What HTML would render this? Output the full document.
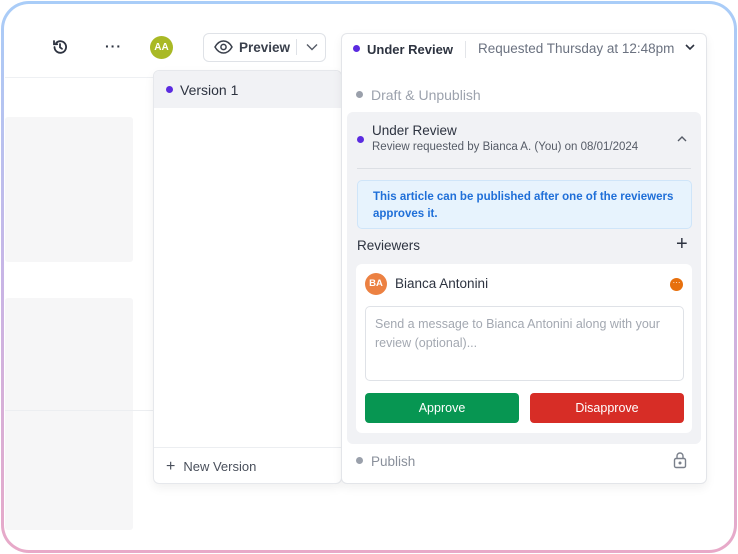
<!DOCTYPE html>
<html><head><style>
*{box-sizing:border-box;margin:0;padding:0}
body{width:738px;height:554px;background:#fff;font-family:"Liberation Sans",sans-serif;position:relative;overflow:hidden;color:#2d3340}
.frame{position:absolute;left:1px;top:1px;width:736px;height:552px;border-radius:28px;padding:3px;background:linear-gradient(#a9cdf8,#c8b5e6 50%,#e8a9c8)}
.inner{width:100%;height:100%;border-radius:25px;background:#fff;position:relative;overflow:hidden}
.a{position:absolute}
.dot{display:inline-block;width:7px;height:7px;border-radius:50%;background:#5b2be0}
.gdot{background:#9aa0ab}
</style></head><body>
<div class="frame"><div class="inner"></div></div>
<div class="a" style="left:5px;top:77px;width:336px;height:1px;background:#eef0f3"></div>
<div class="a" style="left:5px;top:117px;width:128px;height:145px;background:#f6f6f7;border-radius:3px"></div>
<div class="a" style="left:5px;top:298px;width:128px;height:232px;background:#f6f6f7;border-radius:3px"></div>
<div class="a" style="left:5px;top:410px;width:150px;height:1px;background:#eceef1"></div>
<svg class="a" style="left:51px;top:38px" width="18" height="18" viewBox="0 0 18 18" fill="none" stroke="#2d3340" stroke-width="1.8" stroke-linecap="round"><path d="M3.5 9a5.8 5.8 0 1 0 1.7-4.1"/><path d="M3 3v3.2h3.2"/><path d="M9 6v3.3l2 1.5"/></svg>
<div class="a" style="left:105px;top:38px;font-size:14px;font-weight:bold;letter-spacing:1px">···</div>
<div class="a" style="left:150px;top:36px;width:23px;height:23px;border-radius:50%;background:#a9b925;color:#fff;font-size:10px;font-weight:bold;text-align:center;line-height:23px">AA</div>
<div class="a" style="left:203px;top:33px;width:123px;height:29px;border:1px solid #dfe2e7;border-radius:6px;background:#fff"></div>
<svg class="a" style="left:214px;top:40px" width="19" height="14" viewBox="0 0 19 14" fill="none" stroke="#3a404c" stroke-width="1.5"><path d="M1 7C3.5 2.5 6.5 1 9.5 1S15.5 2.5 18 7c-2.5 4.5-5.5 6-8.5 6S3.5 11.5 1 7z"/><circle cx="9.5" cy="7" r="2.6"/></svg>
<div class="a" style="left:239px;top:40px;font-size:13.5px;font-weight:bold;color:#3a404c">Preview</div>
<div class="a" style="left:296px;top:39px;width:1px;height:16px;background:#dfe2e7"></div>
<svg class="a" style="left:306px;top:43px" width="12" height="8" viewBox="0 0 12 8" fill="none" stroke="#555b66" stroke-width="1.4"><path d="M1 1.5l5 5 5-5"/></svg>
<div class="a" style="left:153px;top:70px;width:189px;height:414px;background:#fff;border:1px solid #e6e8ec;border-radius:6px;box-shadow:0 4px 10px rgba(0,0,0,.06);overflow:hidden">
 <div style="height:37px;background:#f1f2f5;padding:11px 0 0 12px;font-size:14px;color:#2d3340"><span class="dot" style="vertical-align:2px;margin-right:7px"></span>Version 1</div>
 <div class="a" style="left:0;top:376px;width:189px;height:1px;background:#eceef1"></div>
 <div class="a" style="left:12px;top:387px;font-size:13px;color:#4a505c"><span style="font-size:16px;margin-right:8px">+</span>New Version</div>
</div>
<div class="a" style="left:341px;top:33px;width:366px;height:451px;background:#fff;border:1px solid #e3e5e9;border-radius:6px;box-shadow:0 4px 10px rgba(0,0,0,.06)">
 <div class="a" style="left:11px;top:8px;font-size:13px;font-weight:bold;color:#2d3340"><span class="dot" style="vertical-align:2px;margin-right:7px"></span>Under Review</div>
 <div class="a" style="left:123px;top:7px;width:1px;height:17px;background:#e3e5e9"></div>
 <div class="a" style="left:136px;top:7px;font-size:13.5px;color:#6b7280">Requested Thursday at 12:48pm</div>
 <svg class="a" style="left:343px;top:10px" width="10" height="7" viewBox="0 0 10 7" fill="none" stroke="#2d3340" stroke-width="1.6"><path d="M1 1l4 4 4-4"/></svg>
 <div class="a" style="left:14px;top:53px;font-size:14px;color:#9ca2ad"><span class="dot gdot" style="vertical-align:2px;margin-right:8px"></span>Draft &amp; Unpublish</div>
 <div class="a" style="left:5px;top:78px;width:354px;height:332px;background:#f1f2f5;border-radius:6px">
  <span class="dot a" style="left:10px;top:24px"></span>
  <div class="a" style="left:25px;top:11px;font-size:13.5px;color:#2d3340">Under Review</div>
  <div class="a" style="left:25px;top:29px;font-size:11.5px;color:#555b66">Review requested by Bianca A. (You) on 08/01/2024</div>
  <svg class="a" style="left:330px;top:23px" width="10" height="7" viewBox="0 0 10 7" fill="none" stroke="#555b66" stroke-width="1.4"><path d="M1 6l4-4 4 4"/></svg>
  <div class="a" style="left:10px;top:56px;width:334px;height:1px;background:#dcdfe4"></div>
  <div class="a" style="left:10px;top:68px;width:335px;height:49px;background:#e7f3fd;border:1px solid #cfe5f9;border-radius:5px;padding:8px 15px;font-size:11.5px;line-height:17px;font-weight:bold;color:#1f6fd8">This article can be published after one of the reviewers approves it.</div>
  <div class="a" style="left:10px;top:126px;font-size:13.5px;color:#2d3340">Reviewers</div>
  <div class="a" style="left:329px;top:121px;font-size:20px;color:#2d3340;font-weight:300">+</div>
  <div class="a" style="left:9px;top:152px;width:336px;height:169px;background:#fff;border-radius:6px">
   <div class="a" style="left:9px;top:9px;width:22px;height:22px;border-radius:50%;background:#ec8142;color:#fff;font-size:9.5px;font-weight:bold;text-align:center;line-height:22px">BA</div>
   <div class="a" style="left:39px;top:12px;font-size:13.5px;color:#2d3340">Bianca Antonini</div>
   <div class="a" style="left:314px;top:14px;width:13px;height:13px;border-radius:50%;background:#e7700d;color:#fff;font-size:8px;line-height:9px;text-align:center">···</div>
   <div class="a" style="left:9px;top:42px;width:319px;height:75px;border:1px solid #dfe2e7;border-radius:5px;padding:8px 9px;font-size:12.5px;line-height:19px;color:#a3a8b1">Send a message to Bianca Antonini along with your review (optional)...</div>
   <div class="a" style="left:9px;top:129px;width:154px;height:30px;background:#079652;border-radius:4px;color:#fff;font-size:12.5px;text-align:center;line-height:30px">Approve</div>
   <div class="a" style="left:174px;top:129px;width:154px;height:30px;background:#d72d26;border-radius:4px;color:#fff;font-size:12.5px;text-align:center;line-height:30px">Disapprove</div>
  </div>
 </div>
 <div class="a" style="left:14px;top:420px;font-size:13.5px;color:#8a909b"><span class="dot gdot" style="vertical-align:2px;margin-right:8px"></span>Publish</div>
 <svg class="a" style="left:331px;top:417px" width="14" height="18" viewBox="0 0 14 18" fill="none" stroke="#7a808b" stroke-width="1.4"><rect x="1.5" y="7.5" width="11" height="9" rx="1.5"/><path d="M4 7.5V5a3 3 0 0 1 6 0v2.5"/><circle cx="7" cy="12" r=".8" fill="#7a808b"/></svg>
</div>
</body></html>
